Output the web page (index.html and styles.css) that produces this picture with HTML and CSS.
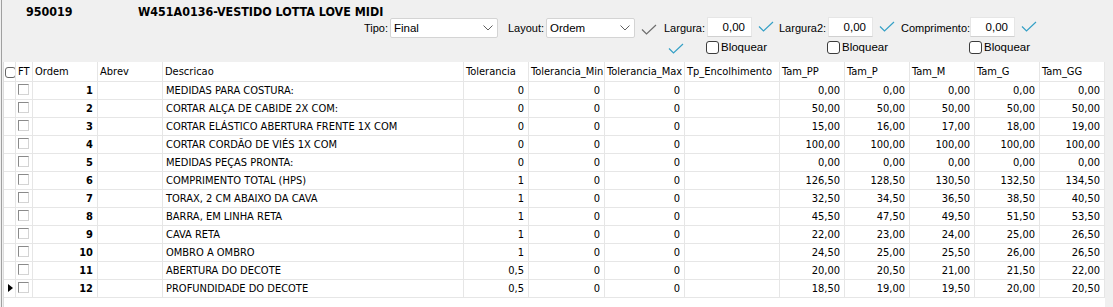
FILE: index.html
```html
<!DOCTYPE html>
<html lang="pt-BR">

<head>
    <meta charset="UTF-8">
    <title>Medidas - 950019</title>
    <link rel="stylesheet" href="styles.css">
</head>

<body>

    <div class="window">
        <div class="top">
            <div class="title">
                <span class="code">950019</span>
                <span class="name">W451A0136-VESTIDO LOTTA LOVE MIDI</span>
            </div>

            <div class="filters">
                <span class="lbl">Tipo:</span>
                <div class="select sel-tipo">
                    <span>Final</span>
                    <svg class="chevron" viewBox="0 0 10 6"><path d="M0.5 0.5 L5 5 L9.5 0.5" /></svg>
                </div>
                <span class="lbl">Layout:</span>
                <div class="select sel-layout">
                    <span>Ordem</span>
                    <svg class="chevron" viewBox="0 0 10 6"><path d="M0.5 0.5 L5 5 L9.5 0.5" /></svg>
                </div>
                <svg class="check gray" viewBox="0 0 16 11"><path d="M1 5.5 L5.5 10 L15 1" /></svg>

                <span class="lbl">Largura:</span>
                <div class="field">0,00</div>
                <svg class="check blue up" viewBox="0 0 16 11"><path d="M1 5.5 L5.5 10 L15 1" /></svg>

                <span class="lbl">Largura2:</span>
                <div class="field">0,00</div>
                <svg class="check blue up" viewBox="0 0 16 11"><path d="M1 5.5 L5.5 10 L15 1" /></svg>

                <span class="lbl">Comprimento:</span>
                <div class="field">0,00</div>
                <svg class="check blue up" viewBox="0 0 16 11"><path d="M1 5.5 L5.5 10 L15 1" /></svg>

                <svg class="check blue lock-check" viewBox="0 0 16 11"><path d="M1 5.5 L5.5 10 L15 1" /></svg>
                <label class="lock lock-1"><span class="box"></span>Bloquear</label>
                <label class="lock lock-2"><span class="box"></span>Bloquear</label>
                <label class="lock lock-3"><span class="box"></span>Bloquear</label>
            </div>
        </div>

        <div class="grid" id="grid">
            <div class="row head">
                <div class="ind"><span class="all"></span></div>
                <div>FT</div>
                <div>Ordem</div>
                <div>Abrev</div>
                <div>Descricao</div>
                <div>Tolerancia</div>
                <div>Tolerancia_Min</div>
                <div>Tolerancia_Max</div>
                <div>Tp_Encolhimento</div>
                <div>Tam_PP</div>
                <div>Tam_P</div>
                <div>Tam_M</div>
                <div>Tam_G</div>
                <div>Tam_GG</div>
            </div>
        </div>
    </div>

    <script>
        // ordem, descricao, tolerancia, tamanhos PP..GG
        const medidas = [
            [1, 'MEDIDAS PARA COSTURA:', '0', ['0,00', '0,00', '0,00', '0,00', '0,00']],
            [2, 'CORTAR ALÇA DE CABIDE 2X COM:', '0', ['50,00', '50,00', '50,00', '50,00', '50,00']],
            [3, 'CORTAR ELÁSTICO ABERTURA FRENTE 1X COM', '0', ['15,00', '16,00', '17,00', '18,00', '19,00']],
            [4, 'CORTAR CORDÃO DE VIÉS 1X COM', '0', ['100,00', '100,00', '100,00', '100,00', '100,00']],
            [5, 'MEDIDAS PEÇAS PRONTA:', '0', ['0,00', '0,00', '0,00', '0,00', '0,00']],
            [6, 'COMPRIMENTO TOTAL (HPS)', '1', ['126,50', '128,50', '130,50', '132,50', '134,50']],
            [7, 'TORAX, 2 CM ABAIXO DA CAVA', '1', ['32,50', '34,50', '36,50', '38,50', '40,50']],
            [8, 'BARRA, EM LINHA RETA', '1', ['45,50', '47,50', '49,50', '51,50', '53,50']],
            [9, 'CAVA RETA', '1', ['22,00', '23,00', '24,00', '25,00', '26,50']],
            [10, 'OMBRO A OMBRO', '1', ['24,50', '25,00', '25,50', '26,00', '26,50']],
            [11, 'ABERTURA DO DECOTE', '0,5', ['20,00', '20,50', '21,00', '21,50', '22,00']],
            [12, 'PROFUNDIDADE DO DECOTE', '0,5', ['18,50', '19,00', '19,50', '20,00', '20,50']]
        ];

        const grid = document.getElementById('grid');

        medidas.forEach((m, index) => {
            const current = index === medidas.length - 1; // last row has the record pointer
            const tamanhos = m[3].map(t => `<div class="num">${t}</div>`).join('');
            grid.innerHTML += `
                <div class="row">
                    <div class="ind">${current ? '<span class="pointer"></span>' : ''}</div>
                    <div><span class="ft"></span></div>
                    <div class="num bold">${m[0]}</div>
                    <div></div>
                    <div class="desc">${m[1]}</div>
                    <div class="num">${m[2]}</div>
                    <div class="num">0</div>
                    <div class="num">0</div>
                    <div></div>
                    ${tamanhos}
                </div>`;
        });
    </script>

</body>

</html>
```

FILE: styles.css
```css
body {
    margin: 0;
    background-color: #f0f0f0;
    font-family: 'Liberation Sans', Arial, sans-serif;
    font-size: 11px;
    color: #000;
    height: 307px;
    overflow: hidden;
}

.window {
    margin-left: 1px;
    border-left: 1px solid #a0a0a0;
    height: 307px;
    display: flex;
    flex-direction: column;
}

.top {
    height: 62px;
    flex: none;
}

.title {
    display: flex;
    padding: 5px 0 0 24px;
    line-height: 14px;
    font-family: 'DejaVu Sans Condensed', 'DejaVu Sans', sans-serif;
    font-stretch: condensed;
    font-size: 12.4px;
    font-weight: bold;
}

.code {
    width: 112px;
}

/* filter bar */
.filters {
    display: grid;
    grid-template-columns: 26px 118px 38px 95px 23px 43px 51px 21px 49px 51px 22px 69px 51px 20px;
    grid-template-rows: 21px 18px;
    align-items: center;
    margin: -2px 0 0 362px;
}

.lbl {
    white-space: nowrap;
}

.select {
    height: 20px;
    box-sizing: border-box;
    background-color: #fff;
    border: 1px solid #d4d4d4;
    border-radius: 2px;
    display: flex;
    align-items: center;
    justify-content: space-between;
    padding: 1px 4px 0 3px;
    font-size: 11.5px;
}

.sel-tipo {
    width: 108px;
}

.sel-layout {
    width: 89px;
}

.chevron {
    width: 10px;
    height: 6px;
    fill: none;
    stroke: #606060;
    stroke-width: 1;
}

.field {
    width: 45px;
    height: 20px;
    box-sizing: border-box;
    background-color: #fff;
    border: 1px solid #e6e6e6;
    border-bottom-color: #d0d0d0;
    text-align: right;
    padding-right: 6px;
    line-height: 18px;
    font-size: 11.5px;
    align-self: start;
}

.check {
    width: 16px;
    height: 11px;
    fill: none;
    stroke-width: 1.2;
}

.check.gray {
    stroke: #6d6d6d;
    margin-top: 4px;
}

.check.blue {
    stroke: #35a0c6;
}

.check.up {
    margin-top: -2px;
}

.lock-check {
    grid-row: 2;
    grid-column: 6;
    margin-left: 4px;
    margin-top: 2px;
}

.lock {
    grid-row: 2;
    display: flex;
    align-items: center;
    white-space: nowrap;
    margin-left: -1px;
    font-size: 11.5px;
}

.lock-1 {
    grid-column: 7 / span 2;
}

.lock-2 {
    grid-column: 10 / span 2;
}

.lock-3 {
    grid-column: 13 / span 2;
}

.box {
    width: 13px;
    height: 13px;
    box-sizing: border-box;
    border: 1px solid #3c3c3c;
    border-radius: 3px;
    background-color: #fff;
    margin-right: 2px;
}

/* data grid */
.grid {
    margin-left: 1px;
    width: 1102px;
    flex: 1;
    box-sizing: border-box;
    background-color: #fff;
    border-left: 1px solid #dcdcdc;
    font-family: 'DejaVu Sans Condensed', 'DejaVu Sans', sans-serif;
    font-stretch: condensed;
    font-size: 11px;
}

.row {
    display: grid;
    grid-template-columns: 12px 17px 65px 65px 301px 65px 76px 80px 95px 65px 65px 65px 65px 65px;
    height: 18px;
}

.row > div {
    box-sizing: border-box;
    border-right: 1px solid #e6e6e6;
    border-bottom: 1px solid #e6e6e6;
    padding: 0 3px;
    line-height: 17px;
    white-space: nowrap;
    overflow: hidden;
}

.head {
    height: 20px;
}

.head > div {
    line-height: 19px;
    padding-left: 2px;
}

.row > .ind {
    padding: 0;
    position: relative;
}

.all {
    display: block;
    width: 9px;
    height: 9px;
    margin: 5px 0 0 1px;
    border: 1px solid #666;
    border-radius: 3px;
}

.pointer {
    position: absolute;
    left: 4px;
    top: 4px;
    border-top: 4.5px solid transparent;
    border-bottom: 4.5px solid transparent;
    border-left: 5px solid #000;
}

.ft {
    display: block;
    width: 11px;
    height: 11px;
    box-sizing: border-box;
    margin: 2px 0 0 -1px;
    border: 1px solid;
    border-color: #8a8a8a #d4d4d4 #d4d4d4 #8a8a8a;
}

.row > .num {
    text-align: right;
    padding-right: 4px;
}

.bold {
    font-weight: bold;
}
```
